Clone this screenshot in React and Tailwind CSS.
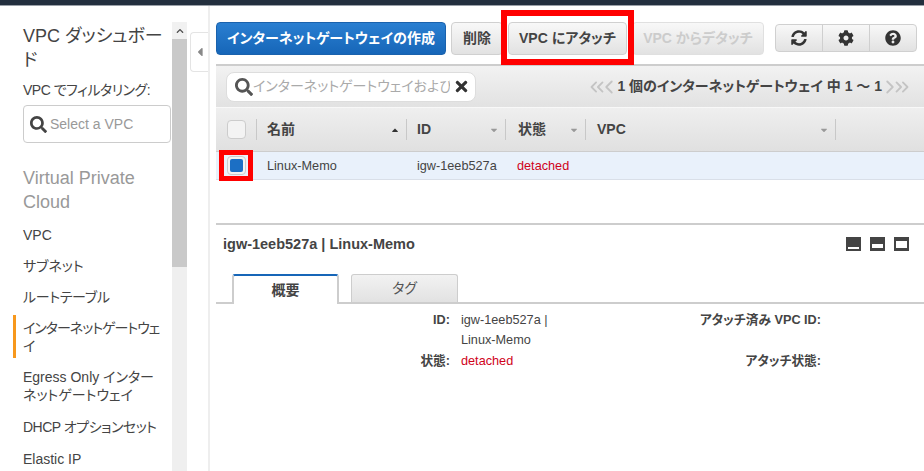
import React from "react";
import { FaSyncAlt, FaCog, FaQuestionCircle, FaSearch, FaTimes, FaCaretUp, FaCaretDown, FaCaretLeft, FaChevronUp } from "react-icons/fa";
import { ChevronLeft, ChevronRight, ChevronsLeft, ChevronsRight } from "lucide-react";

const font = "font-['Liberation_Sans','Noto_Sans_CJK_JP',sans-serif] [font-feature-settings:'palt']";

const navItems = [
    { label: "VPC", h: "h-[31px]" },
    { label: "サブネット", h: "h-[31px]" },
    { label: "ルートテーブル", h: "h-[31px]", text: "tracking-[-0.3px]" },
    { label: "インターネットゲートウェイ", h: "h-[43px] my-[3px]", text: "tracking-[-1px]", active: true },
    { label: "Egress Only インターネットゲートウェイ", h: "h-[50px] pr-[16px]" },
    { label: "DHCP オプションセット", h: "h-[32px]", text: "tracking-[-0.5px]" },
    { label: "Elastic IP", h: "h-[32px]" },
];

const Sidebar = () => (
    <div className="w-[172px] h-[465px] shrink-0 overflow-hidden pt-[18px] text-[#444]">
        <h2 className="pl-[23px] pr-[2px] text-[18px] leading-[24px] text-[#444]">VPC ダッシュボード</h2>
        <p className="pl-[23px] mt-[6px] text-[14px] leading-[24px] tracking-[-0.5px]">VPC でフィルタリング:</p>
        <div className="ml-[23px] mt-[3px] w-[148px] h-[38px] border border-[#ccc] rounded-[4px] flex items-center pl-[6px] gap-[3px]">
            <FaSearch className="text-[#444] text-[17px]" />
            <span className="text-[14px] text-[#999]">Select a VPC</span>
        </div>
        <h3 className="pl-[23px] pr-2 mt-[23px] text-[18px] leading-[24px] text-[#999]">Virtual Private Cloud</h3>
        <ul className="mt-[5px] text-[14px] leading-[18px]">
            {navItems.map((item) => (
                <li key={item.label} className={`${item.h} flex items-center ${item.active ? "ml-[13px] pl-[7px] pr-[8px] border-l-[3px] border-[#f7981d]" : "pl-[23px]"}`}>
                    <span className={item.text}>{item.label}</span>
                </li>
            ))}
        </ul>
    </div>
);

const Scrollbar = () => (
    <div className="w-[15px] h-[449px] mt-[16px] bg-[#efefef] shrink-0 flex flex-col">
        <div className="h-[17px] flex items-center justify-center bg-[#f1f1f1]">
            <FaChevronUp className="text-[#505050] text-[8px]" />
        </div>
        <div className="h-[228px] bg-[#c9c9c9]"></div>
    </div>
);

const ToolButton = ({ children, className = "" }) => (
    <button className={`h-[33px] rounded-[4px] border border-[#d0d0d0] bg-gradient-to-b from-[#f8f8f8] to-[#e2e2e2] text-[14px] font-bold text-[#444] ${className}`}>
        {children}
    </button>
);

const HeadCell = ({ label, className, up }) => (
    <div className={`h-[21px] flex items-center justify-between border-r border-[#c8c8c8] text-[14px] font-bold text-[#444] ${className}`}>
        <span>{label}</span>
        {up ? <FaCaretUp className="text-[#333] text-[10px] mr-[6px]" /> : <FaCaretDown className="text-[#999] text-[10px] mr-[6px]" />}
    </div>
);

const Checkbox = ({ checked }) => (
    <div className="w-[19px] h-[19px] rounded-[4px] border border-[#ccc] bg-[#f3f3f3] flex items-center justify-center">
        {checked && <div className="w-[13px] h-[13px] rounded-[2px] bg-[#1c6fc4]"></div>}
    </div>
);

const PaneIcon = ({ variant }) => (
    <svg width="15" height="14" viewBox="0 0 15 14">
        <rect width="15" height="14" fill="#444" />
        {variant === "bottom" && <rect x="2" y="10" width="11" height="2" fill="#fff" />}
        {variant === "middle" && <rect x="2" y="7" width="11" height="4" fill="#fff" />}
        {variant === "top" && <rect x="2" y="4" width="11" height="7" fill="#fff" />}
    </svg>
);

const Main = () => (
    <div className="flex-1 min-w-0 pl-[6px]">
        {/* Toolbar */}
        <div className="relative flex items-start gap-[5px] pt-[16px] h-[58px]">
            <button className="w-[230px] h-[33px] rounded-[4px] border border-[#1a62ad] bg-gradient-to-b from-[#2a7fd1] to-[#1666b8] text-[14px] font-bold text-white">
                インターネットゲートウェイの作成
            </button>
            <ToolButton className="w-[52px]">削除</ToolButton>
            <ToolButton className="w-[119px]">VPC にアタッチ</ToolButton>
            <ToolButton className="w-[132px] !text-[#ccc] border-[#e0e0e0]">VPC からデタッチ</ToolButton>
            <div className="ml-[6px] mt-[2px] w-[142px] h-[28px] flex rounded-[4px] border border-[#d0d0d0] bg-gradient-to-b from-[#f8f8f8] to-[#e2e2e2] text-[#333]">
                <div className="flex-1 flex items-center justify-center border-r border-[#cfcfcf]"><FaSyncAlt className="text-[16px]" /></div>
                <div className="flex-1 flex items-center justify-center border-r border-[#cfcfcf]"><FaCog className="text-[16px]" /></div>
                <div className="flex-1 flex items-center justify-center"><FaQuestionCircle className="text-[16px]" /></div>
            </div>
            {/* Red callout */}
            <div className="absolute left-[285px] top-[4px] w-[133px] h-[55px] border-[6px] border-[#ff0000]"></div>
        </div>

        {/* Filter bar */}
        <div className="h-[43px] border-t-2 border-[#cdcdcd] bg-gradient-to-b from-[#f2f2f2] to-[#e2e2e2] flex items-center pl-[10px] pr-[16px] justify-between">
            <div className="w-[250px] h-[30px] rounded-[8px] border border-[#ddd] bg-white flex items-center pl-[8px] overflow-hidden">
                <FaSearch className="text-[#555] text-[18px] shrink-0" />
                <span className="w-[197px] shrink-0 overflow-hidden whitespace-nowrap text-[14px] text-[#aaa]">インターネットゲートウェイおよび</span>
                <FaTimes className="text-[#333] text-[17px] shrink-0 ml-[3px]" />
            </div>
            <div className="flex items-center text-[14px] font-bold text-[#444] whitespace-nowrap">
                <ChevronsLeft size={22} strokeWidth={2} className="text-[#c4c4c4] -ml-[5px]" />
                <ChevronLeft size={22} strokeWidth={2} className="text-[#c4c4c4] -ml-[10px] -mr-[3px]" />
                <span>1 個のインターネットゲートウェイ 中 1 ～ 1</span>
                <ChevronRight size={22} strokeWidth={2} className="text-[#c4c4c4] -ml-[3px]" />
                <ChevronsRight size={22} strokeWidth={2} className="text-[#c4c4c4] -ml-[10px] -mr-[5px]" />
            </div>
        </div>

        {/* Table head */}
        <div className="h-[45px] border-t border-[#f8f8f8] border-b border-b-[#cdcdcd] bg-gradient-to-b from-[#efefef] to-[#e0e0e0] flex items-center">
            <div className="w-[41px] h-[21px] border-r border-[#c8c8c8] pl-[11px] flex items-center">
                <Checkbox />
            </div>
            <HeadCell label="名前" up className="w-[150px] pl-[10px]" />
            <HeadCell label="ID" className="w-[99px] pl-[10px]" />
            <HeadCell label="状態" className="w-[80px] pl-[12px]" />
            <HeadCell label="VPC" className="w-[250px] pl-[11px]" />
        </div>

        {/* Row */}
        <div className="relative h-[28px] border-b border-[#d9dfe8] bg-[#e9f1fb] flex items-center text-[12.7px] text-[#444]">
            <div className="w-[41px] pl-[11px]"><Checkbox checked /></div>
            <div className="w-[150px] pl-[10px] pt-[2px]">Linux-Memo</div>
            <div className="w-[100px] pl-[10px] pt-[2px]">igw-1eeb527a</div>
            <div className="pl-[10px] pt-[2px] text-[#d0021b]">detached</div>
            <div className="absolute left-[3px] top-[-2px] w-[34px] h-[31px] border-[5px] border-[#ff0000]"></div>
        </div>

        {/* Details */}
        <div className="mt-[43px] border-t-2 border-[#cdcdcd]">
            <div className="h-[49px] flex items-start justify-between pl-[7px] pr-[15px] pt-[10px]">
                <h3 className="text-[14.5px] leading-[18px] font-bold text-[#444]">igw-1eeb527a | Linux-Memo</h3>
                <div className="flex gap-[9px] pt-[2px]">
                    <PaneIcon variant="bottom" />
                    <PaneIcon variant="middle" />
                    <PaneIcon variant="top" />
                </div>
            </div>
            <div className="h-[30px] border-b-2 border-[#cdcdcd] flex items-end pl-[16px] gap-[12px]">
                <div className="w-[107px] h-[30px] -mb-[2px] border-x-2 border-t-2 border-x-[#cdcdcd] border-t-[#1666b8] rounded-t-[3px] bg-white flex items-center justify-center text-[14px] font-bold text-[#444]">概要</div>
                <div className="w-[107px] h-[28px] border border-b-0 border-[#cdcdcd] rounded-t-[3px] bg-gradient-to-b from-[#f2f2f2] to-[#e2e2e2] flex items-center justify-center text-[14px] text-[#555]">タグ</div>
            </div>
            <div className="grid grid-cols-[234px_100px_249px] gap-x-[11px] text-[12.7px] leading-[20px] text-[#444] pt-[6px]">
                <div className="text-right font-bold">ID:</div>
                <div>igw-1eeb527a | Linux-Memo</div>
                <div className="text-right font-bold">アタッチ済み VPC ID:</div>
                <div className="text-right font-bold pt-[1px]">状態:</div>
                <div className="text-[#d0021b] pt-[1px]">detached</div>
                <div className="text-right font-bold pt-[1px]">アタッチ状態:</div>
            </div>
        </div>
    </div>
);

export default function App() {
    return (
        <div className={`w-[924px] h-[471px] overflow-hidden bg-white ${font}`}>
            <div className="h-[6px] bg-[#232f3e] border-b border-[#9aa0a8]"></div>
            <div className="flex h-[465px]">
                <Sidebar />
                <Scrollbar />
                <div className="w-[3px] shrink-0"></div>
                <div className="w-[18px] h-[40px] mt-[26px] shrink-0 border border-r-0 border-[#e4e4e4] rounded-l-[4px] flex items-center justify-center">
                    <FaCaretLeft className="text-[#888] text-[14px]" />
                </div>
                <div className="w-[2px] shrink-0 bg-[#eeeeee]"></div>
                <Main />
            </div>
        </div>
    );
}
